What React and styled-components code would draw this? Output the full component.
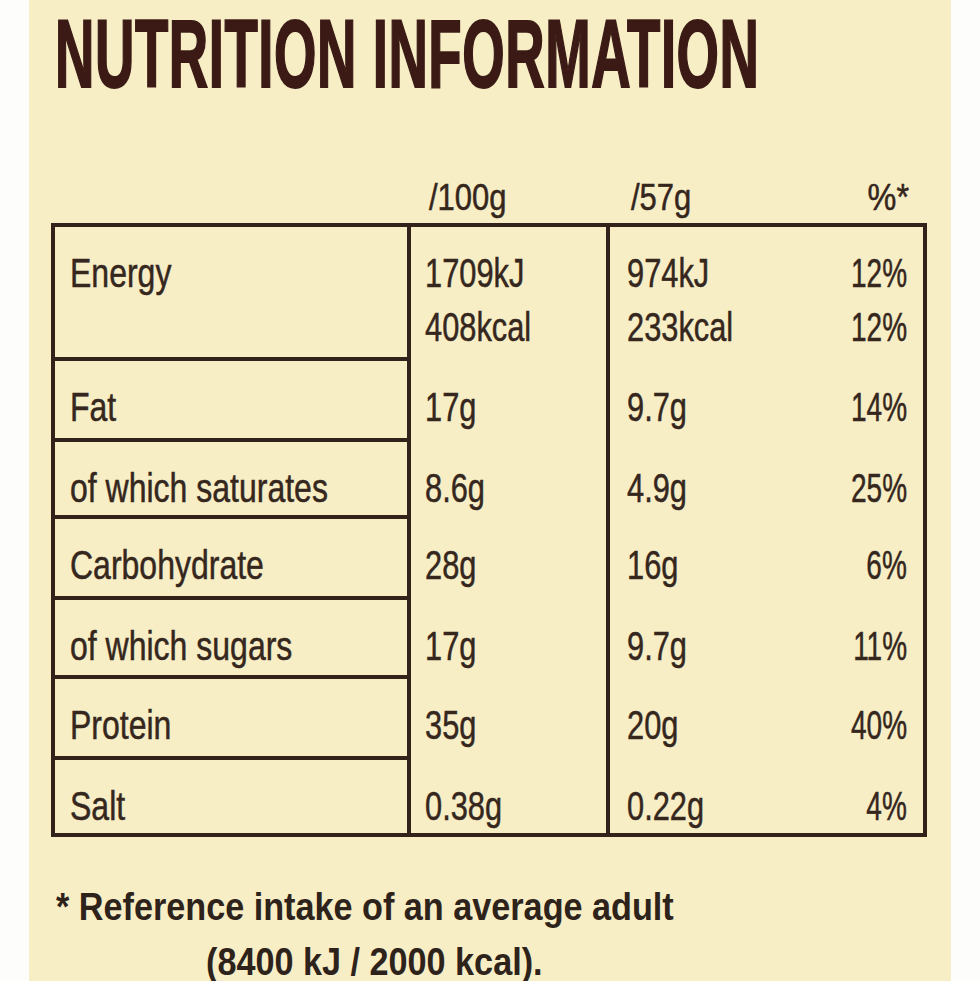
import React from "react";
import styled, { createGlobalStyle } from "styled-components";

const rows = [
  { label: "Energy", per100: ["1709kJ", "408kcal"], per57: ["974kJ", "233kcal"], pct: ["12%", "12%"], h: 134 },
  { label: "Fat", per100: ["17g"], per57: ["9.7g"], pct: ["14%"], h: 81 },
  { label: "of which saturates", per100: ["8.6g"], per57: ["4.9g"], pct: ["25%"], h: 77 },
  { label: "Carbohydrate", per100: ["28g"], per57: ["16g"], pct: ["6%"], h: 81 },
  { label: "of which sugars", per100: ["17g"], per57: ["9.7g"], pct: ["11%"], h: 79 },
  { label: "Protein", per100: ["35g"], per57: ["20g"], pct: ["40%"], h: 81 },
  { label: "Salt", per100: ["0.38g"], per57: ["0.22g"], pct: ["4%"], h: 73 },
];

const GlobalStyle = createGlobalStyle`
  body {
    margin: 0;
    background: #fdfdfb;
    font-family: "Liberation Sans", Arial, sans-serif;
  }
`;

const Page = styled.div`
  width: 980px;
  height: 981px;
  padding: 0 29px;
  box-sizing: border-box;
  overflow: hidden;
`;

const Panel = styled.div`
  height: 100%;
  background: #f7eec6;
  padding: 0 22px;
  display: flex;
  flex-direction: column;
`;

// condensed look: no narrow face installed, so squeeze the regular one
const Squeeze = styled.span`
  display: inline-block;
  white-space: nowrap;
  transform: scaleX(${(p) => p.$x || 0.78});
  transform-origin: ${(p) => (p.$right ? "right" : "left")} center;
`;

const Title = styled.h1`
  margin: 6px 0 0 4px;
  font-size: 96px;
  line-height: 96px;
  font-weight: 700;
  letter-spacing: 1px;
  color: #3b1a15;
  -webkit-text-stroke: 2px #3b1a15;
`;

const HeadRow = styled.div`
  display: grid;
  grid-template-columns: 360px 199px 1fr;
  margin-top: 74px;
  padding: 0 20px 0 4px;
  font-size: 36px;
  line-height: 44px;
  color: #35261c;
  -webkit-text-stroke: 0.5px #35261c;
`;

const HeadCell = styled.div`
  padding-left: ${(p) => p.$pad || 0}px;
`;

const SplitHead = styled(HeadCell)`
  display: flex;
  justify-content: space-between;
`;

const Table = styled.div`
  margin-top: 3px;
  width: 876px;
  box-sizing: border-box;
  border: 4px solid #33221a;
  display: grid;
  grid-template-columns: 356px 199px 1fr;
  font-size: 40px;
  line-height: 54px;
  color: #35271d;
  -webkit-text-stroke: 0.5px #35271d;
`;

const LabelCell = styled.div`
  height: ${(p) => p.$h}px;
  box-sizing: border-box;
  padding: 19px 0 0 15px;
  border-right: 4px solid #33221a;
  border-bottom: ${(p) => (p.$last ? "none" : "4px solid #33221a")};
`;

const ValueCell = styled.div`
  height: ${(p) => p.$h}px;
  box-sizing: border-box;
  padding: 19px 0 0 14px;
  border-right: 4px solid #33221a;
`;

const WideCell = styled.div`
  height: ${(p) => p.$h}px;
  box-sizing: border-box;
  padding: 19px 16px 0 17px;
`;

const Line = styled.div`
  display: flex;
  justify-content: space-between;
`;

const Footnote = styled.div`
  margin-top: 43px;
  padding-left: 5px;
  font-size: 38px;
  line-height: 55px;
  font-weight: 700;
  color: #2e231b;
`;

const Indent = styled.div`
  padding-left: 150px;
`;

export default function App() {
  return (
    <Page>
      <GlobalStyle />
      <Panel>
        <Title>
          <Squeeze $x={0.568}>NUTRITION INFORMATION</Squeeze>
        </Title>
        <HeadRow>
          <div />
          <HeadCell $pad={14}>
            <Squeeze $x={0.86}>/100g</Squeeze>
          </HeadCell>
          <SplitHead $pad={17}>
            <Squeeze $x={0.86}>/57g</Squeeze>
            <Squeeze $x={0.9} $right>%*</Squeeze>
          </SplitHead>
        </HeadRow>
        <Table>
          {rows.map((r, i) => (
            <React.Fragment key={r.label}>
              <LabelCell $h={r.h} $last={i === rows.length - 1}>
                <Squeeze $x={0.8}>{r.label}</Squeeze>
              </LabelCell>
              <ValueCell $h={r.h}>
                {r.per100.map((v) => (
                  <div key={v}>
                    <Squeeze $x={0.77}>{v}</Squeeze>
                  </div>
                ))}
              </ValueCell>
              <WideCell $h={r.h}>
                {r.per57.map((v, j) => (
                  <Line key={v + j}>
                    <Squeeze $x={0.77}>{v}</Squeeze>
                    <Squeeze $x={0.7} $right>{r.pct[j]}</Squeeze>
                  </Line>
                ))}
              </WideCell>
            </React.Fragment>
          ))}
        </Table>
        <Footnote>
          <div>
            <Squeeze $x={0.9}>* Reference intake of an average adult</Squeeze>
          </div>
          <Indent>
            <Squeeze $x={0.9}>(8400 kJ / 2000 kcal).</Squeeze>
          </Indent>
        </Footnote>
      </Panel>
    </Page>
  );
}
